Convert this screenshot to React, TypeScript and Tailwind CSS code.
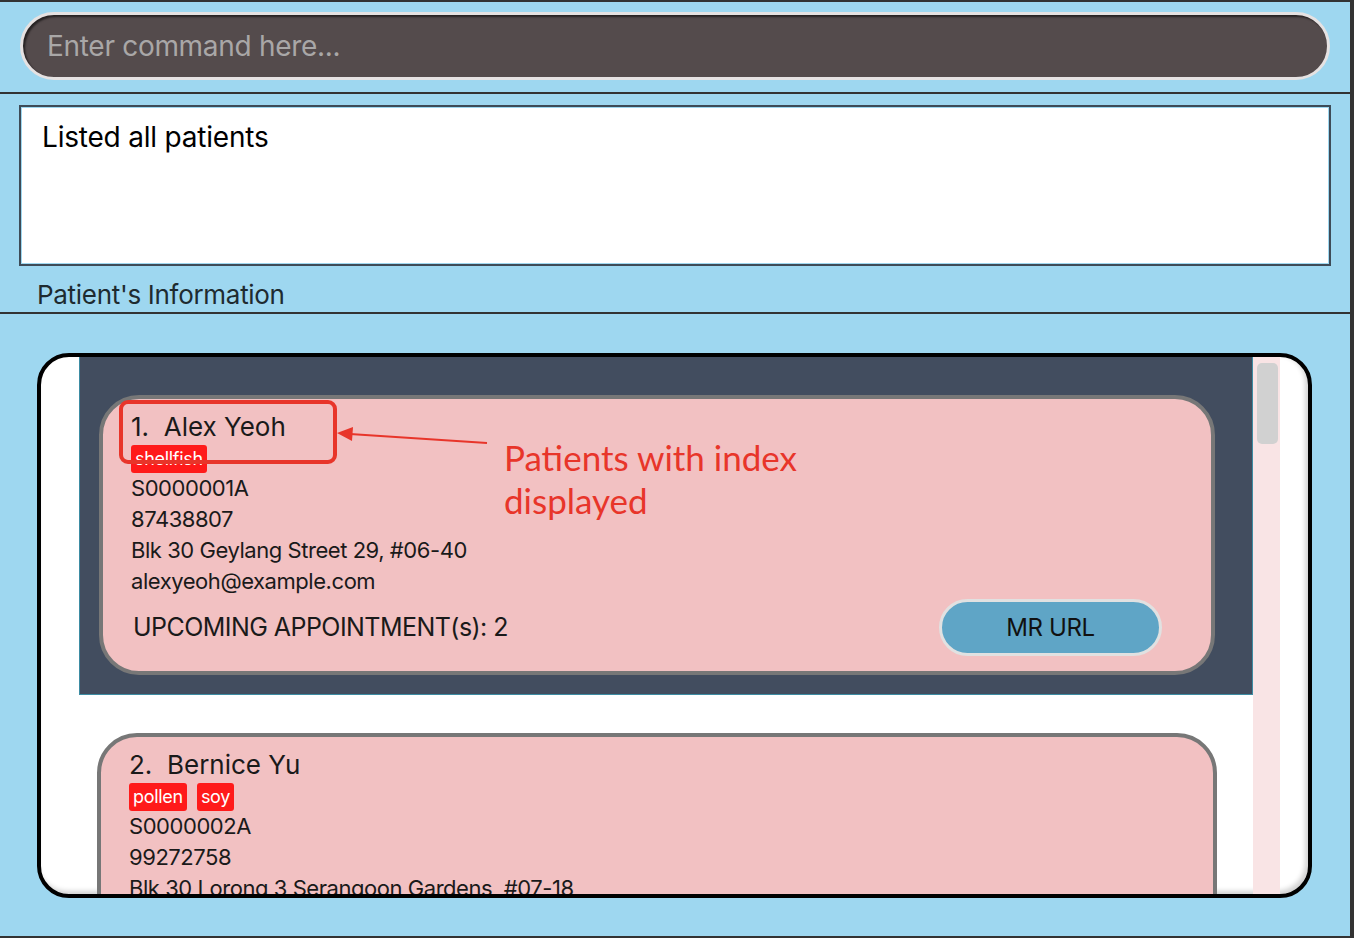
import React from "react";

type Patient = {
  index: number;
  name: string;
  tags: string[];
  nric: string;
  phone: string;
  address: string;
  email: string;
  appointments: number;
};

const patients: Patient[] = [
  {
    index: 1,
    name: "Alex Yeoh",
    tags: ["shellfish"],
    nric: "S0000001A",
    phone: "87438807",
    address: "Blk 30 Geylang Street 29, #06-40",
    email: "alexyeoh@example.com",
    appointments: 2,
  },
  {
    index: 2,
    name: "Bernice Yu",
    tags: ["pollen", "soy"],
    nric: "S0000002A",
    phone: "99272758",
    address: "Blk 30 Lorong 3 Serangoon Gardens, #07-18",
    email: "berniceyu@example.com",
    appointments: 0,
  },
];

function PatientCard({ p }: { p: Patient }) {
  return (
    <div className="rounded-[40px] border-4 border-[#777777] bg-[#f2c1c2] pt-[12px] pb-[15px] pl-[28px] pr-[49px] text-[#1a1a1a]">
      <p className="h-[32px] text-[26px] leading-[32px] whitespace-pre">
        {p.index}.  {p.name}
      </p>
      <div className="mt-[2px] flex gap-[10px]">
        {p.tags.map((t) => (
          <span
            key={t}
            className="h-[28px] rounded-[3px] bg-[#ff1a1a] px-[4px] text-[18px] leading-[28px] tracking-[-0.3px] text-white"
          >
            {t}
          </span>
        ))}
      </div>
      {[p.nric, p.phone, p.address, p.email].map((line) => (
        <p key={line} className="text-[22px] leading-[31px] tracking-[-0.45px]">
          {line}
        </p>
      ))}
      <div className="mt-[2px] flex items-center justify-between">
        <p className="ml-[2px] text-[25px] tracking-[-0.55px]">
          UPCOMING APPOINTMENT(s): {p.appointments}
        </p>
        <button className="h-[57px] w-[223px] rounded-full border-[3px] border-[#e1e1e1] bg-[#5fa5c6] text-[24px] tracking-[-0.4px] text-[#111]">
          MR URL
        </button>
      </div>
    </div>
  );
}

export default function App() {
  return (
    <div className="relative h-[944px] w-[1354px] overflow-hidden bg-white font-['Inter',sans-serif]">
      <div className="h-[938px] w-[1354px] border-t-2 border-r-4 border-b-2 border-[#333333] bg-[#9ed7f0]">
        {/* Command box */}
        <section className="h-[92px] border-b-2 border-[#333333] px-[20px] pt-[10px]">
          <div className="flex h-[68px] items-center rounded-full border-[3px] border-[#e6e2e2] bg-[#544b4c] pl-[24px] shadow-[inset_2px_2px_2px_rgba(0,0,0,0.55)]">
            <span className="text-[28px] tracking-[-0.3px] text-[#a9a7a7]">
              Enter command here...
            </span>
          </div>
        </section>

        {/* Result display */}
        <section className="h-[220px] border-b-2 border-[#333333] px-[19px] pt-[11px]">
          <div className="h-[161px] border-2 border-[#3d4b57] bg-white pt-[13px] pl-[21px] shadow-[inset_0_0_0_1px_#9ed7f0]">
            <p className="text-[28px] leading-[34px] tracking-[-0.2px] text-black">
              Listed all patients
            </p>
          </div>
          <p className="mt-[14px] pl-[18px] text-[26px] leading-[30px] tracking-[-0.3px] text-[#1e2b30]">
            Patient's Information
          </p>
        </section>

        {/* Patient list */}
        <section className="pt-[39px] pl-[37px] pr-[38px]">
          <div className="flex h-[545px] overflow-hidden rounded-[32px] border-4 border-black bg-white shadow-[inset_-3px_-3px_5px_rgba(0,0,0,0.18)]">
            <div className="ml-[38px] w-[1174px] shrink-0">
              <div className="h-[338px] border-x border-b border-[#3d8ca3] bg-[#424d5f] pt-[38px] pr-[37px] pl-[19px]">
                <PatientCard p={patients[0]} />
              </div>
              <div className="pt-[38px] pr-[36px] pl-[18px]">
                <PatientCard p={patients[1]} />
              </div>
            </div>
            <div className="w-[27px] shrink-0 bg-[#f9e4e5] pt-[6px] pr-[2px] pl-[4px]">
              <div className="h-[81px] rounded-[5px] bg-[#d1d1d1]" />
            </div>
          </div>
        </section>
      </div>

      {/* Annotation overlay */}
      <div className="absolute top-[400px] left-[119px] h-[64px] w-[218px] rounded-[9px] border-4 border-[#e8352a]" />
      <svg
        className="absolute top-[420px] left-[330px]"
        width="170"
        height="40"
        viewBox="0 0 170 40"
      >
        <line x1="20" y1="14" x2="157" y2="23" stroke="#e8352a" strokeWidth="2" />
        <polygon points="7,13 23,7 22,21" fill="#e8352a" />
      </svg>
      <p className="absolute top-[436px] left-[504px] font-['Lato',sans-serif] text-[35px] leading-[43px] text-[#e8352a]">
        Patients with index
        <br />
        displayed
      </p>
    </div>
  );
}
